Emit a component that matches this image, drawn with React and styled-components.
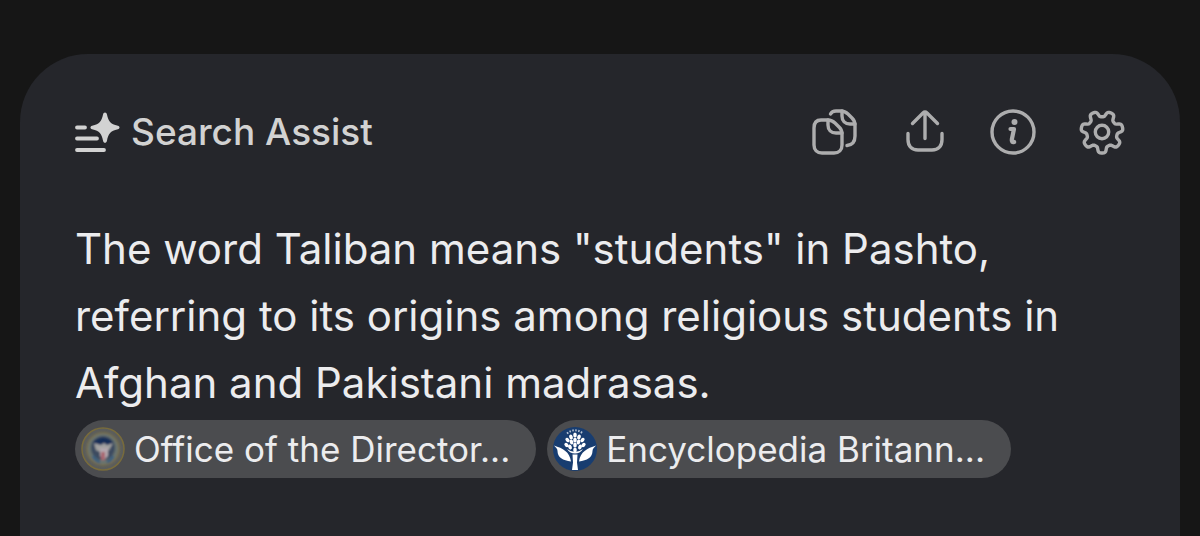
import React from 'react'
import styled, { createGlobalStyle } from 'styled-components'

const gearPath = () => {
    const points = []
    for (let i = 0; i < 210; i++) {
        const angle = (i / 210) * Math.PI * 2
        const wave = Math.tanh(Math.cos(angle * 7) * 2 + 0.1)
        const r = 18.1 + wave * 3
        points.push(`${(23 + Math.sin(angle) * r).toFixed(2)} ${(23 + Math.cos(angle) * r).toFixed(2)}`)
    }
    return `M${points.join('L')}Z`
}

const AssistIcon = () => (
    <svg width="46" height="40" viewBox="0 0 46 40" aria-hidden="true">
        <path d="M2 15.5h8M2 26.5h20M2 38h27" stroke="currentColor" strokeWidth="3.8" strokeLinecap="round" />
        <path
            d="M30 0.5c1 0 1.6.7 1.9 1.8 1.6 7.3 3.2 9.7 11 11.5 2.2.6 2.2 3 0 3.5-7.8 1.9-9.4 4.3-11 11.6-.3 1.2-.9 1.8-1.9 1.8s-1.6-.6-1.9-1.8c-1.6-7.3-3.2-9.700-11-11.600-2.200-.5-2.200-2.900 0-3.500 7.800-1.800 9.400-4.200 11-11.500.3-1.100.9-1.800 1.900-1.800z"
            fill="currentColor"
        />
    </svg>
)

const CopyIcon = () => (
    <Glyph viewBox="0 0 46 46">
        <path d="M9 11h7c3 0 5 1 7 3l4.500 4.500c2 2 2.500 4 2.500 6.500v11c0 5-3 8-8 8H10c-5 0-8-3-8-8V19c0-5 2.500-8 7-8z" />
        <path d="M16 11v5c0 5 3 8 8 8h6" />
        <path d="M18.500 5C19.500 3 21.500 2 24 2h5c3 0 5 1 7 3l4 4c2 2 3 4 3 7v11c0 6-3 9-8 9.500" />
        <path d="M30 2v5c0 5 3 8 8 8h5" />
    </Glyph>
)

const ShareIcon = () => (
    <Glyph viewBox="0 0 46 46">
        <path d="M24 29.500V3M11.500 14.500L22 4c1.300-1.300 2.700-1.300 4 0l10.500 10.500" />
        <path d="M7 24.500v6c0 6.500 3.500 10.500 10 10.500h14c6.500 0 10-4 10-10.500v-6" />
    </Glyph>
)

const InfoIcon = () => (
    <Glyph viewBox="0 0 46 46">
        <circle cx="23" cy="23" r="21" />
        <path d="M20.500 20h3.500l-2.200 10.500c-.4 2 .6 3 2.400 2.500" strokeWidth="4.200" />
        <circle cx="24.500" cy="13" r="3" fill="currentColor" stroke="none" />
    </Glyph>
)

const SettingsIcon = () => (
    <Glyph viewBox="0 0 46 46">
        <path d={gearPath()} />
        <circle cx="23" cy="23" r="6.700" />
    </Glyph>
)

const SealIcon = () => (
    <SourceIcon viewBox="0 0 46 46" aria-hidden="true">
        <defs>
            <filter id="soft">
                <feGaussianBlur stdDeviation="0.9" />
            </filter>
        </defs>
        <circle cx="23" cy="23" r="21" fill="#5b5d5c" stroke="#786b3c" strokeWidth="1.5" />
        <g filter="url(#soft)">
            <circle cx="23" cy="23" r="16" fill="#69736f" stroke="#7a7048" strokeWidth="1.5" />
            <circle cx="23" cy="22" r="12" fill="#3c4c60" />
            <path d="M13 16q10-9 20 0l-3 5H16z" fill="#182e58" />
            <path d="M14 17l7 2 3-2 3 2 6-2-4 7-3 2h-6l-4-2z" fill="#a2a1a0" />
            <path d="M20 22h8v8l-4 4-4-4z" fill="#b3a7ad" />
            <path d="M21 26h4v8h-4z" fill="#a96670" />
            <path d="M13 30q4 6 7 6M27 36q4-1 6-6" stroke="#3b6080" strokeWidth="3" fill="none" />
        </g>
    </SourceIcon>
)

const seeds = [
    [23, 9], [19, 11], [27, 11], [23, 14], [15.5, 14], [30.5, 14],
    [19.5, 16], [26.5, 16], [14.5, 19], [31.5, 19], [23, 19],
    [18, 21], [28, 21], [23, 24],
]

const ThistleIcon = () => (
    <SourceIcon viewBox="0 0 46 46" aria-hidden="true">
        <circle cx="23" cy="23" r="22" fill="#183d70" />
        <path d="M15 7.5Q23 1 31 7.5" stroke="#b5c2d3" strokeWidth="2" strokeDasharray="1.5 1.5" fill="none" />
        <g fill="#fff">
            {seeds.map(([x, y]) => (
                <ellipse
                    key={`${x}-${y}`}
                    cx={x}
                    cy={y}
                    rx="1.8"
                    ry="2.5"
                    transform={`rotate(${(x - 23) * 5} ${x} ${y})`}
                />
            ))}
            <path d="M15 23q8 6 16 0-3 4.500-8 4.500T15 23z" />
            <path d="M20.500 28.500h5l-.5 8 1 7.500h-6l1-7.500z" />
            <path d="M2 19.500c9 3 15.500 6 17 16-8-1-13.500-4-13.500-10.500 0-2-1.500-3.500-3.500-5.500z" />
            <path d="M44 19.500c-9 3-15.500 6-17 16 8-1 13.500-4 13.500-10.500 0-2 1.500-3.500 3.500-5.500z" />
        </g>
    </SourceIcon>
)

const actions = [
    { label: 'Copy', Icon: CopyIcon },
    { label: 'Share', Icon: ShareIcon },
    { label: 'About', Icon: InfoIcon },
    { label: 'Settings', Icon: SettingsIcon },
]

const sources = [
    { name: 'Office of the Director...', Icon: SealIcon },
    { name: 'Encyclopedia Britann...', Icon: ThistleIcon },
]

const App = () => {
    return (
        <>
            <GlobalStyle />
            <Page>
                <Card>
                    <Header>
                        <Title>
                            <AssistIcon />
                            Search Assist
                        </Title>
                        <Actions>
                            {actions.map(({ label, Icon }) => (
                                <IconButton key={label} type="button" aria-label={label}>
                                    <Icon />
                                </IconButton>
                            ))}
                        </Actions>
                    </Header>
                    <Answer>
                        The word Taliban means "students" in Pashto, referring to its origins among religious
                        students in Afghan and Pakistani madrasas.
                    </Answer>
                    <Sources>
                        {sources.map(({ name, Icon }) => (
                            <SourceLink key={name} href="#">
                                <Icon />
                                {name}
                            </SourceLink>
                        ))}
                    </Sources>
                </Card>
            </Page>
        </>
    )
}

const GlobalStyle = createGlobalStyle`
    * {
        box-sizing: border-box;
    }

    body {
        margin: 0;
        background: #161616;
        font-family: Inter, "Noto Sans", sans-serif;
    }
`

const Page = styled.main`
    display: flex;
    min-height: 100vh;
    padding: 54px 20px 0;
`

const Card = styled.section`
    flex: 1;
    min-width: 0;
    padding: 54px 55px 56px;
    border-radius: 68px 68px 0 0;
    background: #25262b;
    color: #ececee;
`

const Header = styled.header`
    display: flex;
    align-items: center;
    justify-content: space-between;
    height: 48px;
`

const Title = styled.h1`
    display: flex;
    align-items: center;
    gap: 10px;
    margin: 0;
    color: #d2d2d2;
    font-size: 37px;
    font-weight: 500;
    line-height: 48px;
`

const Actions = styled.div`
    display: flex;
    gap: 43px;
`

const IconButton = styled.button`
    display: flex;
    padding: 0;
    border: none;
    background: transparent;
    color: #adadae;
    cursor: pointer;
`

const Glyph = styled.svg`
    width: 46px;
    height: 46px;
    fill: none;
    stroke: currentColor;
    stroke-width: 3.4;
    stroke-linecap: round;
    stroke-linejoin: round;
`

const Answer = styled.p`
    margin: 59px 0 0;
    padding-right: 40px;
    font-size: 42px;
    line-height: 67px;
`

const Sources = styled.div`
    display: flex;
    flex-wrap: wrap;
    gap: 11px;
    margin-top: 4px;
`

const SourceLink = styled.a`
    display: flex;
    align-items: center;
    gap: 8px;
    height: 58px;
    padding: 0 26px 0 5px;
    border-radius: 999px;
    background: #4b4c4f;
    color: #ececee;
    font-size: 35px;
    white-space: nowrap;
    text-decoration: none;
`

const SourceIcon = styled.svg`
    flex: none;
    width: 46px;
    height: 46px;
`

export default App
